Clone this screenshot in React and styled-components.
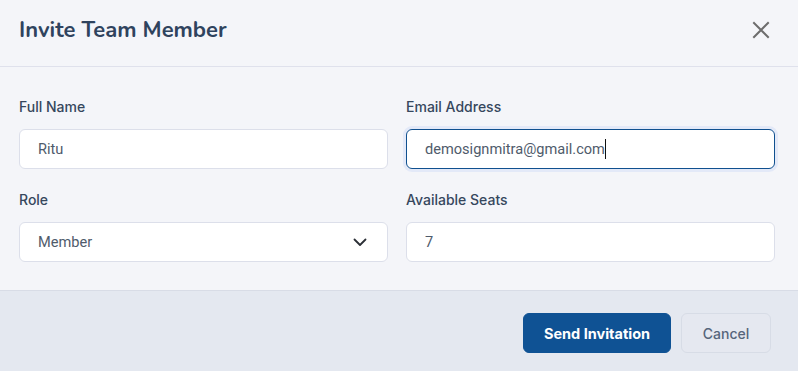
import React from "react";
import styled, { createGlobalStyle } from "styled-components";

const Global = createGlobalStyle`
  html, body { margin: 0; padding: 0; background: #f4f5f9; }
  * { box-sizing: border-box; }
`;

const Dialog = styled.div`
  width: 798px;
  height: 371px;
  display: flex;
  flex-direction: column;
  background: #f4f5f9;
  font-family: Inter, "Noto Sans", sans-serif;
`;

const Header = styled.header`
  height: 67px;
  flex: none;
  display: flex;
  align-items: center;
  justify-content: space-between;
  padding: 0 24px 0 19px;
  border-bottom: 1px solid #dfe1ec;
`;

const Title = styled.h2`
  margin: 0;
  font-family: "Nunito", Lato, "Noto Sans", sans-serif;
  font-size: 22px;
  font-weight: 700;
  color: #2f435e;
  letter-spacing: 0;
  padding-bottom: 6px;
`;

const CloseButton = styled.button`
  border: 0;
  background: none;
  padding: 0;
  width: 26px;
  height: 26px;
  display: flex;
  align-items: center;
  justify-content: center;
  cursor: pointer;
  margin-bottom: 7px;
`;

const Body = styled.div`
  flex: 1;
  display: grid;
  grid-template-columns: 369px 369px;
  column-gap: 18px;
  row-gap: 22px;
  padding: 31px 0 0 19px;
  align-content: start;
`;

const Field = styled.div`
  display: flex;
  flex-direction: column;
  gap: 13px;
`;

const Label = styled.label`
  font-size: 14px;
  font-weight: 500;
  color: #36475d;
  line-height: 18px;
`;

const Input = styled.input`
  height: 40px;
  width: 100%;
  border: 1px solid #dcdfea;
  border-radius: 6px;
  background: #fff;
  padding: 0 18px;
  font-family: Roboto, "Noto Sans", sans-serif;
  font-size: 14.6px;
  color: #4f5b6b;
  outline: none;
`;

const FocusBox = styled.div`
  height: 40px;
  width: 100%;
  border: 1px solid #10508f;
  border-radius: 6px;
  background: #fff;
  padding: 0 18px;
  display: flex;
  align-items: center;
  font-family: Roboto, "Noto Sans", sans-serif;
  font-size: 14.6px;
  color: #4f5b6b;
  box-shadow: 0 0 0 3px #e3e9f8;
`;

const Caret = styled.span`
  width: 1px;
  height: 20px;
  background: #111;
`;

const Select = styled.div`
  height: 40px;
  width: 100%;
  border: 1px solid #dcdfea;
  border-radius: 6px;
  background: #fff;
  padding: 0 20px 0 18px;
  display: flex;
  align-items: center;
  justify-content: space-between;
  font-family: Roboto, "Noto Sans", sans-serif;
  font-size: 14.6px;
  color: #4f5b6b;
`;

const Footer = styled.footer`
  height: 81px;
  flex: none;
  display: flex;
  align-items: flex-start;
  justify-content: flex-end;
  gap: 10px;
  padding: 22px 27px 0 0;
  background: #e4e8f0;
  border-top: 1px solid #d8dce6;
`;

const Button = styled.button`
  height: 40px;
  border-radius: 6px;
  font-family: Inter, "Noto Sans", sans-serif;
  font-size: ${(p) => (p.$primary ? 14.5 : 14)}px;
  font-weight: ${(p) => (p.$primary ? 700 : 500)};
  padding: 0;
  width: ${(p) => p.$w}px;
  cursor: pointer;
  border: 1px solid ${(p) => (p.$primary ? "#0f5294" : "#d7dce6")};
  background: ${(p) => (p.$primary ? "#0f5294" : "#e5e8f0")};
  color: ${(p) => (p.$primary ? "#ffffff" : "#56657b")};
`;

export default function App() {
  return (
    <>
      <Global />
      <Dialog>
        <Header>
          <Title>Invite Team Member</Title>
          <CloseButton aria-label="Close">
            <svg width="18" height="18" viewBox="0 0 18 18" fill="none" stroke="#6d6d6d" strokeWidth="2" strokeLinecap="square">
              <path d="M2 2L16 16M16 2L2 16" />
            </svg>
          </CloseButton>
        </Header>
        <Body>
          <Field>
            <Label>Full Name</Label>
            <Input defaultValue="Ritu" readOnly />
          </Field>
          <Field>
            <Label>Email Address</Label>
            <FocusBox>
              <span>demosignmitra@gmail.com</span>
              <Caret />
            </FocusBox>
          </Field>
          <Field>
            <Label>Role</Label>
            <Select>
              <span>Member</span>
              <svg width="14" height="9" viewBox="0 0 14 9" fill="none" stroke="#2b2f36" strokeWidth="1.8" strokeLinecap="round" strokeLinejoin="round">
                <path d="M1.5 1.5L7 7L12.5 1.5" />
              </svg>
            </Select>
          </Field>
          <Field>
            <Label>Available Seats</Label>
            <Input defaultValue="7" readOnly />
          </Field>
        </Body>
        <Footer>
          <Button $primary $w={148}>Send Invitation</Button>
          <Button $w={90}>Cancel</Button>
        </Footer>
      </Dialog>
    </>
  );
}
